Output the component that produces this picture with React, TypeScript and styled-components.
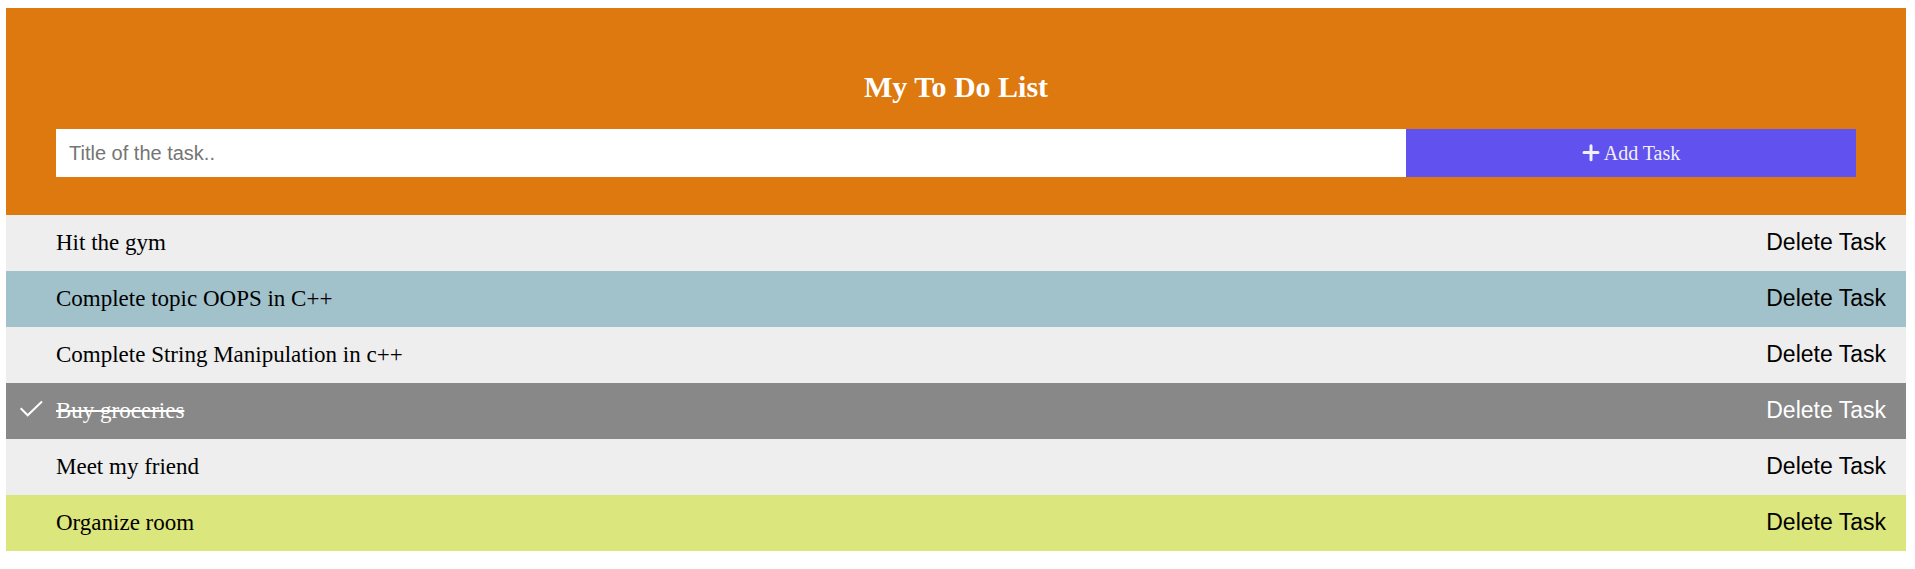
import React from "react";
import styled, { createGlobalStyle } from "styled-components";

const GlobalStyle = createGlobalStyle`
  * { box-sizing: border-box; }
  body { margin: 8px 9px 8px 6px; background: #fff; font-family: "Liberation Serif", "Times New Roman", serif; }
`;

const Header = styled.header`
  background: #dd790f;
  padding: 30px 50px 38px;
  color: #fff;
  text-align: center;
`;

const Title = styled.h2`
  margin: 30px 0 24px;
  font-size: 30px;
  line-height: 37px;
`;

const Form = styled.form`
  display: flex;
`;

const TaskInput = styled.input`
  width: 75%;
  height: 48px;
  padding: 0 13px;
  border: none;
  border-radius: 0;
  font: 20px "Liberation Sans", Arial, sans-serif;
`;

const AddButton = styled.button`
  display: flex;
  align-items: center;
  justify-content: center;
  gap: 4px;
  width: 25%;
  height: 48px;
  padding: 0;
  border: none;
  background: #6152f0;
  color: #f0f0f8;
  font: 20px "Liberation Serif", "Times New Roman", serif;
  cursor: pointer;
`;

const List = styled.ul`
  margin: 0;
  padding: 0;
  list-style: none;
`;

const Item = styled.li<{ $done?: boolean; $color: string }>`
  position: relative;
  display: flex;
  align-items: center;
  justify-content: space-between;
  height: 56px;
  padding: 0 4px 0 50px;
  background: ${(p) => p.$color};
  color: ${(p) => (p.$done ? "#fff" : "#000")};
`;

const TaskTitle = styled.span<{ $done?: boolean }>`
  font-size: 23px;
  text-decoration: ${(p) => (p.$done ? "line-through 2px" : "none")};
`;

const Check = styled.svg`
  position: absolute;
  left: 12px;
  top: 14px;
`;

const DeleteButton = styled.button`
  padding: 14px 16px 16px;
  border: none;
  background: transparent;
  color: inherit;
  font: 23px/26px "Liberation Sans", Arial, sans-serif;
  cursor: pointer;
`;

const tasks = [
  { title: "Hit the gym", color: "#eee" },
  { title: "Complete topic OOPS in C++", color: "#a2c2cb" },
  { title: "Complete String Manipulation in c++", color: "#eee" },
  { title: "Buy groceries", color: "#888", done: true },
  { title: "Meet my friend", color: "#eee" },
  { title: "Organize room", color: "#dbe67c" },
];

export default function App() {
  return (
    <>
      <GlobalStyle />
      <Header>
        <Title>My To Do List</Title>
        <Form onSubmit={(e) => e.preventDefault()}>
          <TaskInput type="text" placeholder="Title of the task.." aria-label="Title of the task" />
          <AddButton type="submit">
            <svg width="18" height="18" viewBox="0 0 18 18" aria-hidden="true">
              <path
                d="M9 1.8v14M2 8.5h14"
                stroke="currentColor"
                strokeWidth="3"
                strokeLinecap="round"
              />
            </svg>
            Add Task
          </AddButton>
        </Form>
      </Header>
      <List>
        {tasks.map((t) => (
          <Item key={t.title} $color={t.color} $done={t.done}>
            {t.done && (
              <Check width="26" height="24" viewBox="0 0 26 24" aria-hidden="true">
                <path d="M2.7 11.3L9.7 18.3L24 4.5" fill="none" stroke="#fff" strokeWidth="2" />
              </Check>
            )}
            <TaskTitle $done={t.done}>{t.title}</TaskTitle>
            <DeleteButton type="button">Delete Task</DeleteButton>
          </Item>
        ))}
      </List>
    </>
  );
}
